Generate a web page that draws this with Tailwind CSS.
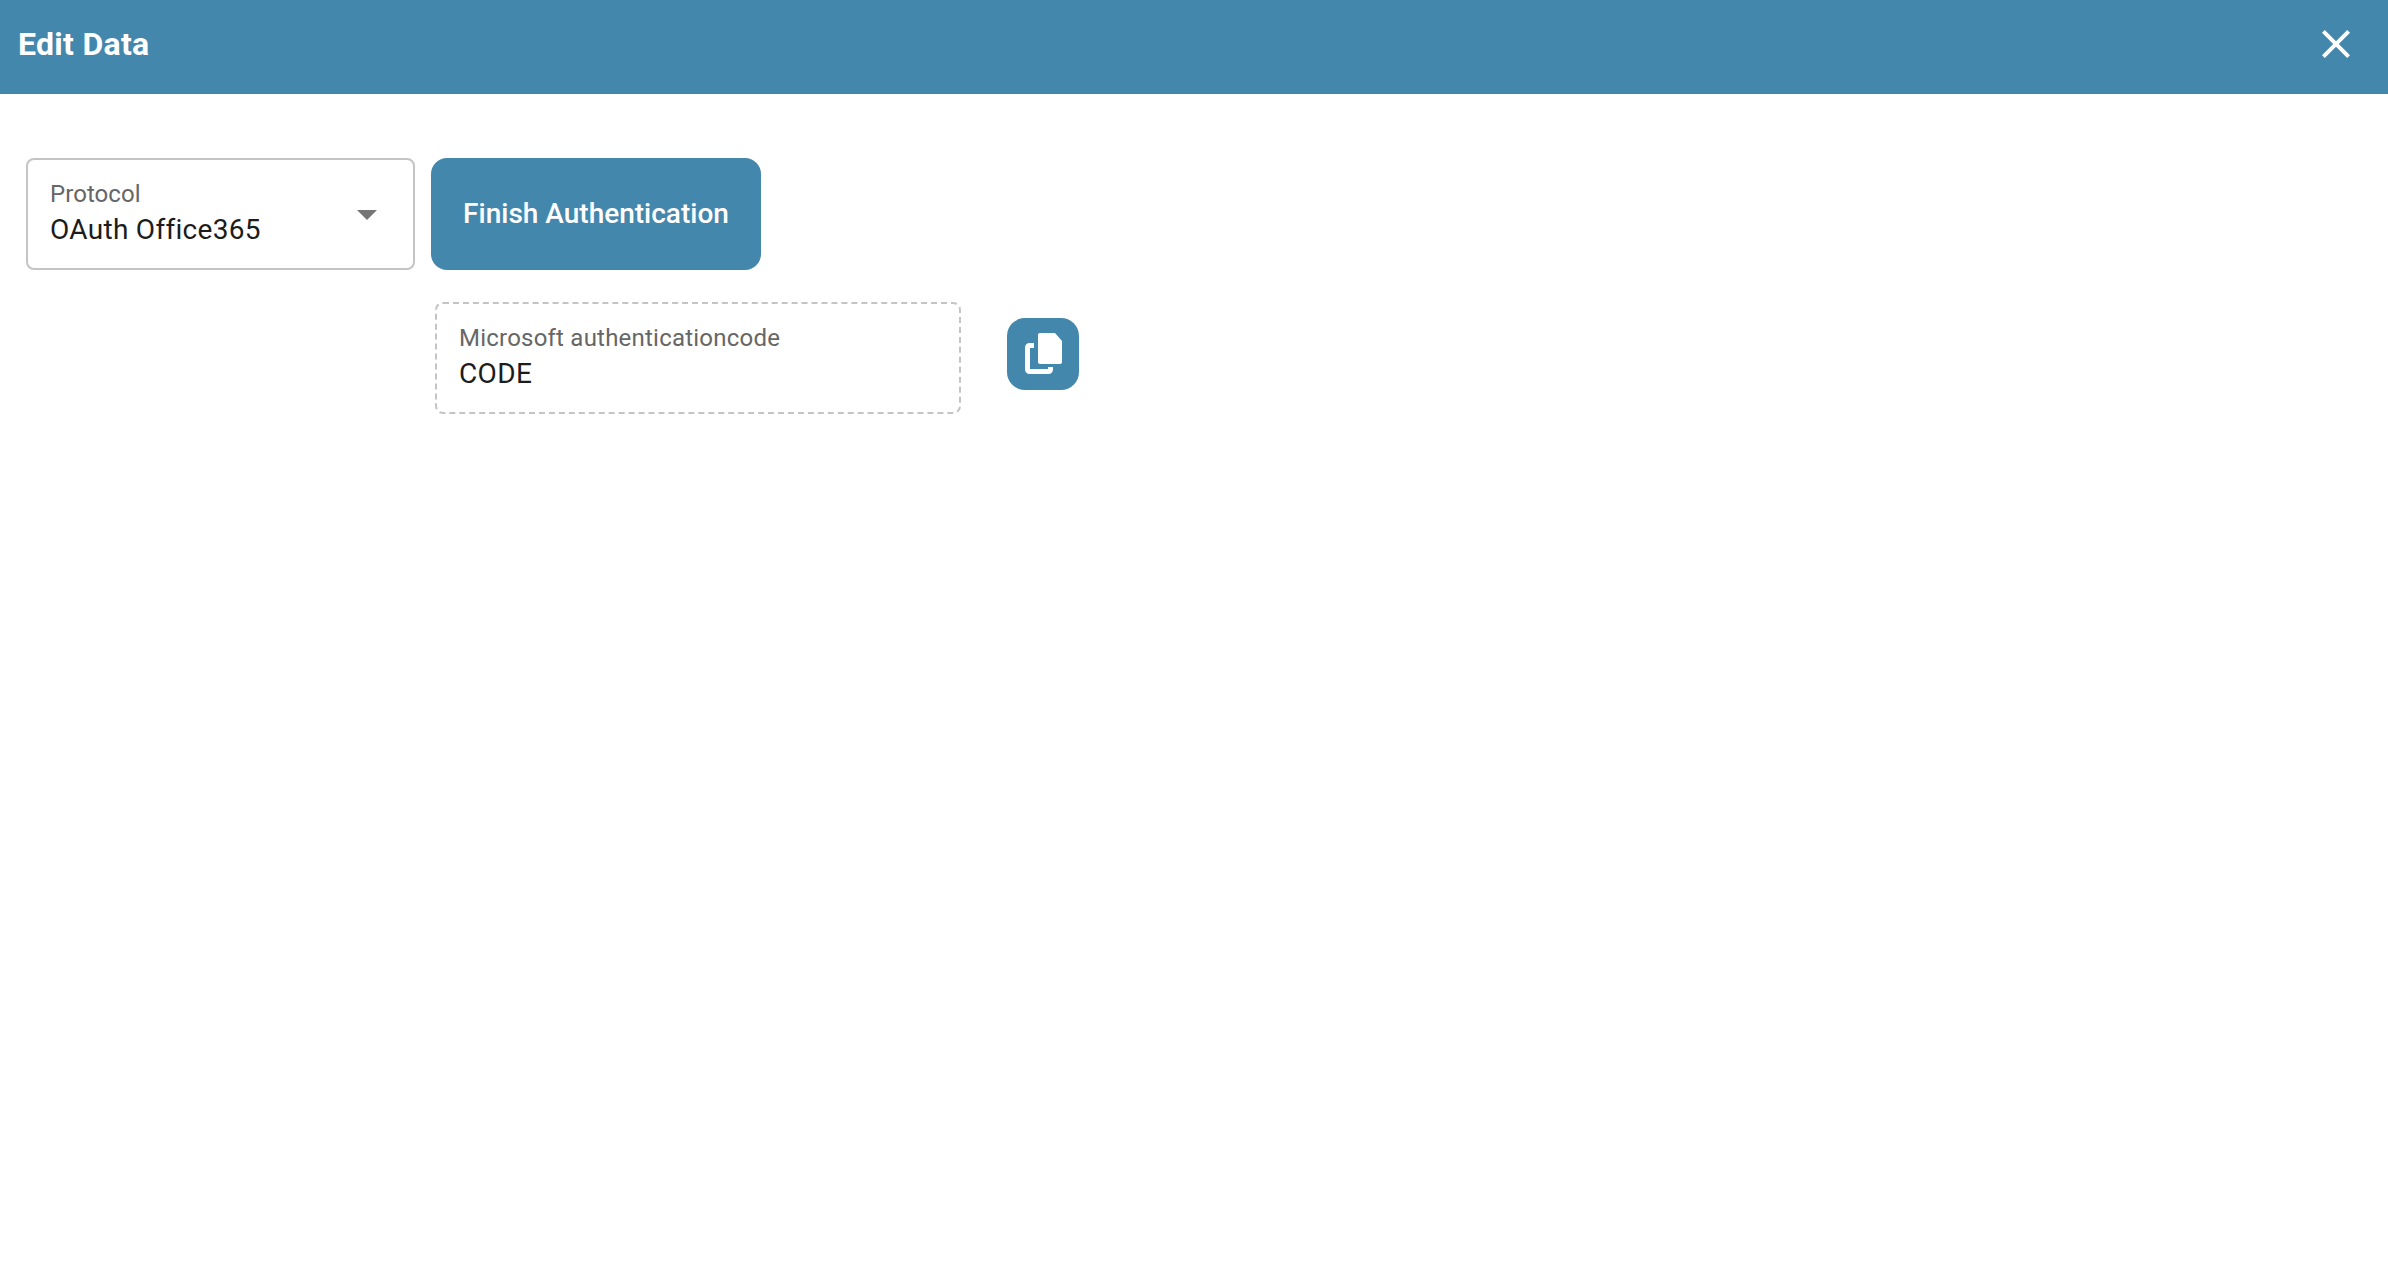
<!DOCTYPE html>
<html><head><script src="https://cdn.jsdelivr.net/npm/@tailwindcss/browser@4"></script></head>
<body class="bg-white font-['Roboto',sans-serif]">
<div class="w-[2388px] h-[1288px] overflow-hidden flex flex-col">
<header class="h-[94px] bg-[#4487ad] flex items-center justify-between pl-[18px] pr-[28px] pb-[7px] text-white">
<h1 class="text-[32px] font-bold tracking-[0.3px] leading-[40px]">Edit Data</h1>
<svg class="w-[48px] h-[48px]" viewBox="0 0 24 24" fill="white"><path d="M19 6.41 17.59 5 12 10.59 6.41 5 5 6.41 10.59 12 5 17.59 6.41 19 12 13.41 17.59 19 19 17.59 13.41 12z"/></svg>
</header>
<main class="pl-[26px] pt-[64px]">
<div class="flex gap-[16px]">
<div class="w-[389px] h-[112px] border-2 border-[#c4c4c4] rounded-[8px] pl-[22px] pr-[22px] flex items-center justify-between">
<div><div class="text-[24px] leading-[28px] tracking-[0.05px] text-[#666666]">Protocol</div><div class="text-[28px] leading-[36px] tracking-[0.3px] text-[#1c1c1c] mt-[4px]">OAuth Office365</div></div>
<svg class="w-[48px] h-[48px]" viewBox="0 0 24 24" fill="#757575"><path d="M7 10l5 5 5-5z"/></svg>
</div>
<button class="w-[330px] h-[112px] rounded-[16px] bg-[#4487ad] text-white text-[28px] font-medium">Finish Authentication</button>
</div>
<div class="flex items-start ml-[409px] mt-[32px]">
<div class="w-[526px] h-[112px] border-2 border-dashed border-[#c4c4c4] rounded-[8px] pl-[22px] flex flex-col justify-center">
<div class="text-[24px] leading-[28px] tracking-[0.22px] text-[#666666]">Microsoft authenticationcode</div><div class="text-[28px] leading-[36px] tracking-[0.4px] text-[#1c1c1c] mt-[4px]">CODE</div>
</div>
<button class="ml-[46px] mt-[16px] w-[72px] h-[72px] rounded-[18px] bg-[#4487ad]">
<svg class="w-[72px] h-[72px]" viewBox="0 0 72 72" fill="none"><path d="M33 15h15l7 8v21a2 2 0 0 1-2 2H33a2 2 0 0 1-2-2V17a2 2 0 0 1 2-2z" fill="white"/><path d="M27 27.5h-4.500a2 2 0 0 0-2 2V51.500a2 2 0 0 0 2 2H41.500a2 2 0 0 0 2-2V49" stroke="white" stroke-width="5"/></svg>
</button>
</div>
</main>
</div>
</body></html>
